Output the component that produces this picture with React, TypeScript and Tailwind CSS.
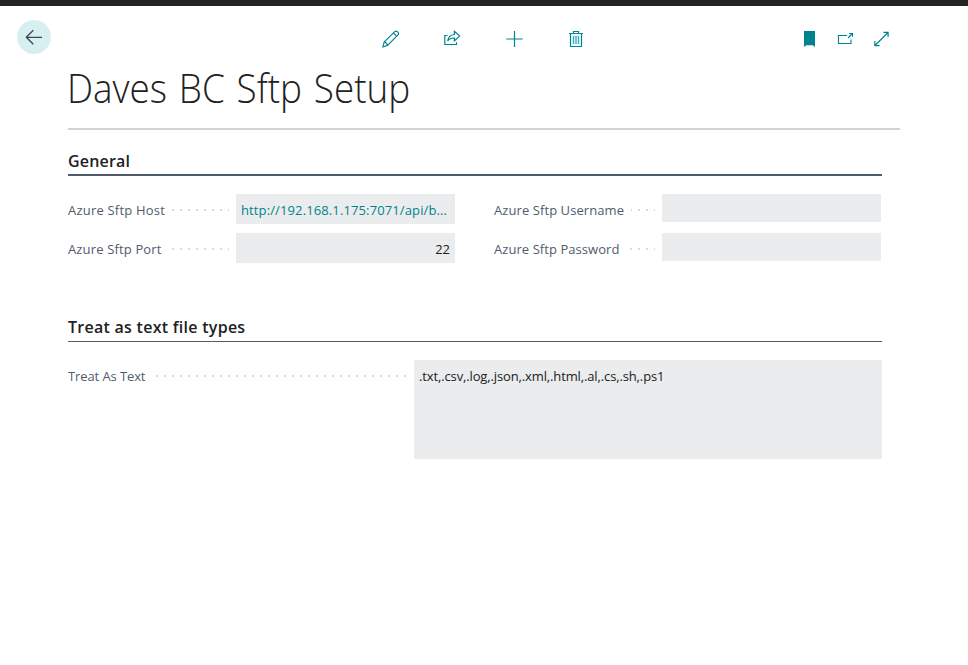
import type { ReactNode } from "react";

const dots =
  "bg-[linear-gradient(90deg,#d9dadb_2px,transparent_2px)] bg-[length:8px_2px] bg-repeat-x bg-[position:0_15px]";

function Caption({ text, width, spacing }: { text: string; width: string; spacing: string }) {
  return (
    <div className={`h-[30px] shrink-0 overflow-hidden ${width} ${dots}`}>
      <span className={`inline-block h-[30px] bg-white pr-[7px] text-[13px] leading-[32px] whitespace-nowrap text-[#505c6d] ${spacing}`}>
        {text}
      </span>
    </div>
  );
}

function Row({ caption, spacing, children }: { caption: string; spacing: string; children?: ReactNode }) {
  return (
    <div className="flex h-[30px]">
      <Caption text={caption} width="w-[161px]" spacing={spacing} />
      <div className="w-[7px]" />
      {children}
    </div>
  );
}

function Heading({ text, className }: { text: string; className: string }) {
  return <h2 className={`w-[814px] text-[16px] font-semibold whitespace-nowrap text-[#212121] ${className}`}>{text}</h2>;
}

const teal = "#00838f";

export default function App() {
  return (
    <main className="h-[665px] w-[968px] overflow-hidden bg-white font-['Open_Sans','Noto_Sans',sans-serif]">
      <div className="h-[6px] bg-[#252525]" />
      <header className="flex h-[54px] pt-[14px] pl-[17px]">
        <button className="flex size-[34px] items-center justify-center rounded-full bg-[#d8eff1]" aria-label="Back">
          <svg width="34" height="34" fill="none" stroke="#37474c" strokeWidth="1.3">
            <path d="M25 17.3H9.3M16.3 10.3l-7 7 7 7" />
          </svg>
        </button>
        <nav className="ml-[331px] flex h-[18px] mt-[10px]">
          <svg width="18" height="18" fill="none" stroke={teal} strokeWidth="1.1">
            <path d="M.9 16.9 2.1 12 12.7 1.7Q14.2.4 15.7 1.8 17.3 3.4 16 5L5.5 15.5.9 16.9ZM2.1 12q2.8.3 3.4 3.5M11.4 3l3.3 3.3" />
          </svg>
          <svg className="ml-[44px]" width="18" height="18" fill="none" stroke={teal} strokeWidth="1.2">
            <path d="M3.5 5.5H.8v9h11.7v-2.3M3.7 11C4.2 7.1 6.5 4.9 10.4 4.5V1.4l5.3 4.7-5.3 4.7V8c-3.1-.1-5.1.7-6.7 3Z" />
          </svg>
          <svg className="ml-[44px]" width="18" height="18" fill="none" stroke={teal}>
            <path d="M8.5 1v16" strokeWidth="1.2" />
            <path d="M.3 9h16.4" strokeWidth="2" opacity=".5" />
          </svg>
          <svg className="ml-[44px]" width="18" height="18" fill="none" stroke={teal} strokeWidth="1.2">
            <path d="M1 3.5h14M5.5 3V1.5h5V3M2.5 3.5v13h11v-13" />
            <path d="M5.5 6v8M8 6v8M10.5 6v8" stroke="#2db0c4" strokeWidth="1.4" />
          </svg>
        </nav>
        <nav className="ml-[217px] mt-[10px] flex h-[18px]">
          <svg width="18" height="18" fill={teal}>
            <path d="M1 1h11v16l-2.2-1.7H3.3L1 17Z" />
          </svg>
          <svg className="ml-[16px]" width="18" height="18" fill="none" stroke={teal} strokeWidth="1.1">
            <path d="M10 5.5H1.5v8h12.5V9.5M11 8l4-4M12.3 3.5h3.2v3.3" />
          </svg>
          <svg className="ml-[17px]" width="18" height="18" fill="none" stroke={teal} strokeWidth="1.2">
            <path d="M3 15.5 16 2.5M11.4 2.4h4.7v4.7M2.9 10.9v4.7h4.7" />
          </svg>
        </nav>
      </header>

      <div className="ml-[68px] w-[832px]">
        <h1 className="h-[70px] border-b-2 border-[#d0d2d5] text-[40px] leading-[55px] font-light [word-spacing:2.4px] whitespace-nowrap text-[#212121]">
          <span className="-ml-[1px] inline-block origin-left scale-x-[0.922]">Daves BC Sftp Setup</span>
        </h1>

        <section className="h-[164px] pt-[18px]">
          <Heading text="General" className="h-[28px] border-b-2 border-[#505c6d] leading-[26px] tracking-[0.2px]" />
          <div className="flex gap-[39px] pt-[18px]">
            <div className="flex flex-col gap-[9px]">
              <Row caption="Azure Sftp Host" spacing="tracking-[0.2px]">
                <a className="w-[219px] overflow-hidden bg-[#ebecee] pl-[5px] text-[13px] leading-[32px] tracking-[0.12px] whitespace-nowrap text-[#00838f]">
                  http://192.168.1.175:7071/api/b...
                </a>
              </Row>
              <Row caption="Azure Sftp Port" spacing="tracking-[0.15px]">
                <div className="w-[219px] bg-[#ebecee] pr-[5px] text-right text-[13px] leading-[32px] text-[#212121]">22</div>
              </Row>
            </div>
            <div className="flex flex-col gap-[9px]">
              <Row caption="Azure Sftp Username" spacing="tracking-[0.08px]">
                <div className="h-[28px] w-[219px] bg-[#ebecee]" />
              </Row>
              <Row caption="Azure Sftp Password" spacing="tracking-[0.06px]">
                <div className="h-[28px] w-[219px] bg-[#ebecee]" />
              </Row>
            </div>
          </div>
        </section>

        <section className="pt-[20px]">
          <Heading text="Treat as text file types" className="h-[28px] border-b border-[#505c6d] leading-[26px] tracking-[0.27px]" />
          <div className="flex pt-[18px]">
            <Caption text="Treat As Text" width="w-[339px]" spacing="tracking-[-0.1px]" />
            <div className="ml-[7px] h-[99px] w-[468px] bg-[#ebecee] pl-[5px] text-[13px] leading-[32px] tracking-[-0.13px] whitespace-nowrap text-[#212121]">
              .txt,.csv,.log,.json,.xml,.html,.al,.cs,.sh,.ps1
            </div>
          </div>
        </section>
      </div>
    </main>
  );
}
